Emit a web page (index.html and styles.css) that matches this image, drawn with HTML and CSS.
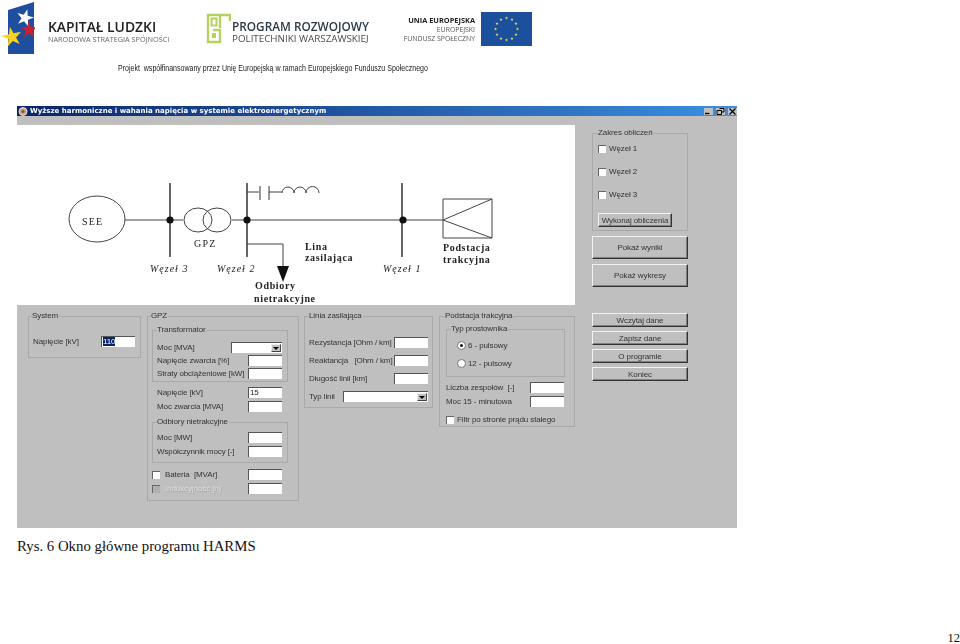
FILE: index.html
```html
<!DOCTYPE html>
<html lang="pl">
<head>
    <meta charset="UTF-8">
    <title>Rys. 6 Okno główne programu HARMS</title>
    <link rel="stylesheet" href="styles.css">
</head>
<body>
    <svg class="defs" width="0" height="0">
        <defs>
            <polygon id="star" points="0,-1 .224,-.309 .951,-.309 .363,.118 .588,.809 0,.38 -.588,.809 -.363,.118 -.951,-.309 -.224,-.309"/>
        </defs>
    </svg>

    <header class="logos">
        <div class="logo-kl">
            <svg class="kl-flag" width="34" height="56" viewBox="0 0 34 56">
                <polygon points="7,10 33,2 33,54 7,54" fill="#1d4f9e"/>
                <use href="#star" transform="translate(24 18) scale(9) rotate(15)" fill="#fff"/>
                <use href="#star" transform="translate(28 30) scale(9)" fill="#c8202c"/>
                <use href="#star" transform="translate(11 37) scale(10.5) rotate(-12)" fill="#f6d320"/>
            </svg>
            <div class="kl-text">
                <div class="kl-name">KAPITAŁ LUDZKI</div>
                <div class="kl-sub">NARODOWA STRATEGIA SPÓJNOŚCI</div>
            </div>
        </div>
        <div class="logo-pr">
            <svg width="25" height="31" viewBox="0 0 25 31">
                <path d="M14 15V2H8M8 2H2V29H14V17H7M14 2H24V8" fill="none" stroke="#b5d160" stroke-width="2.4"/>
                <rect x="5.5" y="5.5" width="5" height="7" fill="none" stroke="#b5d160" stroke-width="2"/>
                <rect x="6" y="20" width="4" height="5" fill="#b5d160"/>
            </svg>
            <div class="pr-text">
                <div class="pr-name">PROGRAM ROZWOJOWY</div>
                <div class="pr-sub">POLITECHNIKI WARSZAWSKIEJ</div>
            </div>
        </div>
        <div class="logo-eu">
            <div class="eu-text">
                <div class="eu-name">UNIA EUROPEJSKA</div>
                <div>EUROPEJSKI</div>
                <div>FUNDUSZ SPOŁECZNY</div>
            </div>
            <svg width="51" height="34" viewBox="0 0 51 34">
                <rect width="51" height="34" fill="#1c4f9c"/>
                <g fill="#e8e060">
                    <use href="#star" transform="translate(25.5 6) scale(1.7)"/>
                    <use href="#star" transform="translate(31 7.5) scale(1.7)"/>
                    <use href="#star" transform="translate(35 11.5) scale(1.7)"/>
                    <use href="#star" transform="translate(36.5 17) scale(1.7)"/>
                    <use href="#star" transform="translate(35 22.5) scale(1.7)"/>
                    <use href="#star" transform="translate(31 26.5) scale(1.7)"/>
                    <use href="#star" transform="translate(25.5 28) scale(1.7)"/>
                    <use href="#star" transform="translate(20 26.5) scale(1.7)"/>
                    <use href="#star" transform="translate(16 22.5) scale(1.7)"/>
                    <use href="#star" transform="translate(14.5 17) scale(1.7)"/>
                    <use href="#star" transform="translate(16 11.5) scale(1.7)"/>
                    <use href="#star" transform="translate(20 7.5) scale(1.7)"/>
                </g>
            </svg>
        </div>
    </header>

    <p class="project">Projekt&nbsp; współfinansowany przez Unię Europejską w ramach Europejskiego Funduszu Społecznego</p>

    <div class="window">
        <div class="titlebar">
            <svg class="app-icon" width="10" height="9" viewBox="0 0 10 9">
                <circle cx="5" cy="4.5" r="4" fill="#c9a58c" stroke="#e8e0d8"/>
                <circle cx="5" cy="4.5" r="1.6" fill="#a04a30"/>
            </svg>
            <span class="title-text">Wyższe harmoniczne i wahania napięcia w systemie elektroenergetycznym</span>
            <div class="title-buttons">
                <div class="title-btn">
                    <svg width="9" height="7" viewBox="0 0 9 7"><path d="M1 5.5H5.5" stroke="#000" stroke-width="1.4"/></svg>
                </div>
                <div class="title-btn">
                    <svg width="9" height="7" viewBox="0 0 9 7"><path d="M3.5 .5H8V4H6M1 2.5H5.5V6.5H1Z" fill="none" stroke="#000"/></svg>
                </div>
                <div class="title-btn">
                    <svg width="9" height="7" viewBox="0 0 9 7"><path d="M1.5 .5L7.5 6.5M7.5 .5L1.5 6.5" stroke="#000" stroke-width="1.2"/></svg>
                </div>
            </div>
        </div>

        <div class="client">
            <svg class="diagram" width="558" height="180" viewBox="17 125 558 180">
                <g fill="none" stroke="#444" stroke-width="1">
                    <ellipse cx="97" cy="219" rx="28" ry="23"/>
                    <ellipse cx="198" cy="220" rx="14" ry="12"/>
                    <ellipse cx="217" cy="220" rx="14" ry="12"/>
                    <path d="M125 220H183M232 220H443"/>
                    <path d="M443 199H492V238H443ZM443 220L492 199M443 220L492 238"/>
                    <path d="M247 192H259M269 192H282"/>
                    <path d="M282 193a6 6 0 0 1 12 0a6 6 0 0 1 12 0a6 6 0 0 1 13 0"/>
                    <path d="M247 244H283V266"/>
                </g>
                <g stroke="#333" stroke-width="1.5">
                    <path d="M170 183V257M247 183V257M402 183V257"/>
                    <path d="M260 186V200M269 186V200" stroke-width="1"/>
                </g>
                <circle cx="170" cy="220" r="3.6" fill="#111"/>
                <circle cx="247" cy="220" r="3.6" fill="#111"/>
                <circle cx="403" cy="220" r="3.6" fill="#111"/>
                <polygon points="277,266 289,266 283,282" fill="#111"/>
                <g class="diagram-text">
                    <text class="wide" x="82" y="225">SEE</text>
                    <text class="wide" x="194" y="247">GPZ</text>
                    <text class="node" x="150" y="272">Węzeł 3</text>
                    <text class="node" x="217" y="272">Węzeł 2</text>
                    <text class="node" x="383" y="272">Węzeł 1</text>
                    <text class="bold" x="305" y="250">Lina</text>
                    <text class="bold" x="305" y="261">zasilająca</text>
                    <text class="bold" x="443" y="251">Podstacja</text>
                    <text class="bold" x="443" y="263">trakcyjna</text>
                    <text class="bold" x="255" y="289">Odbiory</text>
                    <text class="bold" x="254" y="302">nietrakcyjne</text>
                </g>
            </svg>

            <div class="side">
                <fieldset class="box zakres">
                    <legend>Zakres obliczeń</legend>
                    <div class="checks">
                        <div class="check"><span class="checkbox"></span>Węzeł 1</div>
                        <div class="check"><span class="checkbox"></span>Węzeł 2</div>
                        <div class="check"><span class="checkbox"></span>Węzeł 3</div>
                    </div>
                    <div class="btn btn-calc">Wykonaj obliczenia</div>
                </fieldset>
                <div class="btn btn-big">Pokaż wyniki</div>
                <div class="btn btn-big">Pokaż wykresy</div>
            </div>

            <div class="panels">
                <fieldset class="box system">
                    <legend>System</legend>
                    <div class="field"><span>Napięcie [kV]</span><div class="txt"><span class="selected">110</span></div></div>
                </fieldset>

                <fieldset class="box gpz">
                    <legend>GPZ</legend>
                    <fieldset class="box transformator">
                        <legend>Transformator</legend>
                        <div class="field"><span>Moc [MVA]</span><div class="combo combo-moc"><span class="arrow"></span></div></div>
                        <div class="field"><span>Napięcie zwarcia [%]</span><div class="txt"></div></div>
                        <div class="field"><span>Straty obciążeniowe [kW]</span><div class="txt"></div></div>
                    </fieldset>
                    <div class="field loose first"><span>Napięcie [kV]</span><div class="txt">15</div></div>
                    <div class="field loose"><span>Moc zwarcia [MVA]</span><div class="txt"></div></div>
                    <fieldset class="box odbiory">
                        <legend>Odbiory nietrakcyjne</legend>
                        <div class="field"><span>Moc [MW]</span><div class="txt"></div></div>
                        <div class="field"><span>Współczynnik mocy [-]</span><div class="txt"></div></div>
                    </fieldset>
                    <div class="field bateria"><span class="check"><span class="checkbox"></span>Bateria&nbsp; [MVAr]</span><div class="txt"></div></div>
                    <div class="field bateria next"><span class="check disabled"><span class="checkbox"></span>Indukcyjność [n]</span><div class="txt"></div></div>
                </fieldset>

                <fieldset class="box linia">
                    <legend>Linia zasilająca</legend>
                    <div class="field"><span>Rezystancja [Ohm / km]</span><div class="txt"></div></div>
                    <div class="field"><span>Reaktancja&nbsp; &nbsp;[Ohm / km]</span><div class="txt"></div></div>
                    <div class="field"><span>Długość linii [km]</span><div class="txt"></div></div>
                    <div class="field"><span>Typ linii</span><div class="combo combo-linia"><span class="arrow"></span></div></div>
                </fieldset>

                <fieldset class="box podstacja">
                    <legend>Podstacja trakcyjna</legend>
                    <fieldset class="box prostownik">
                        <legend>Typ prostownika</legend>
                        <div class="radio-row"><span class="radio on"></span>6 - pulsowy</div>
                        <div class="radio-row"><span class="radio"></span>12 - pulsowy</div>
                    </fieldset>
                    <div class="field zespoly"><span>Liczba zespołów&nbsp; [-]</span><div class="txt"></div></div>
                    <div class="field minutowa"><span>Moc 15 - minutowa</span><div class="txt"></div></div>
                    <div class="check filtr"><span class="checkbox"></span>Filtr po stronie prądu stałego</div>
                </fieldset>

                <div class="actions">
                    <div class="btn">Wczytaj dane</div>
                    <div class="btn">Zapisz dane</div>
                    <div class="btn">O programie</div>
                    <div class="btn">Koniec</div>
                </div>
            </div>
        </div>
    </div>

    <p class="caption">Rys. 6 Okno główne programu HARMS</p>
    <div class="page-number">12</div>
</body>
</html>
```

FILE: styles.css
```css
html, body {
    margin: 0;
    height: 644px;
    overflow: hidden;
}
body {
    display: flex;
    flex-direction: column;
    background: #fff;
    font-family: "Liberation Serif", serif;
    color: #111;
}
.defs {
    position: absolute;
}

/* logo strip */
.logos {
    display: flex;
    height: 57px;
    filter: blur(0.5px);
    font-family: "Open Sans", sans-serif;
}
.logo-kl {
    display: flex;
    margin-left: 1px;
    width: 188px;
}
.kl-text {
    margin-left: 13px;
    padding-top: 18px;
}
.kl-name {
    font-size: 13.9px;
    line-height: 17px;
    font-weight: 600;
    color: #222;
    white-space: nowrap;
}
.kl-sub {
    font-size: 7.3px;
    line-height: 9px;
    color: #666;
    white-space: nowrap;
}
.logo-pr {
    display: flex;
    width: 197px;
    margin-left: 17px;
    padding-top: 13px;
}
.pr-text {
    margin-left: 1px;
    padding-top: 7px;
}
.pr-name {
    font-size: 11.8px;
    line-height: 13px;
    font-weight: 600;
    color: #2c3a48;
    white-space: nowrap;
}
.pr-sub {
    font-size: 9.8px;
    line-height: 12px;
    color: #4a4a4a;
    white-space: nowrap;
}
.logo-eu {
    display: flex;
    gap: 6px;
    padding-top: 12px;
}
.eu-text {
    width: 72px;
    padding-top: 4px;
    text-align: right;
    font-size: 6.9px;
    line-height: 9px;
    color: #555;
    white-space: nowrap;
}
.eu-name {
    font-size: 7.4px;
    font-weight: 700;
    color: #222;
}

.project {
    margin: 5px 0 0 118px;
    transform: scaleX(0.74);
    transform-origin: left;
    font-family: "Liberation Sans", sans-serif;
    font-size: 9.5px;
    line-height: 12px;
    color: #222;
    white-space: nowrap;
}

/* program window */
.window {
    margin: 32px 0 0 17px;
    width: 720px;
    height: 422px;
    filter: blur(0.5px);
    font-family: "Liberation Sans", sans-serif;
    font-size: 8px;
    letter-spacing: -0.1px;
    color: #333;
}
.titlebar {
    display: flex;
    align-items: center;
    height: 10px;
    padding: 0 0 0 1px;
    background: linear-gradient(to right, #0a246a, #3b8fe0);
}
.title-text {
    margin-left: 2px;
    font-family: "DejaVu Sans", sans-serif;
    font-size: 7px;
    font-weight: bold;
    letter-spacing: 0;
    color: #fff;
    white-space: nowrap;
}
.title-buttons {
    display: flex;
    gap: 3px;
    margin-left: auto;
}
.title-btn {
    display: flex;
    width: 9px;
    height: 7px;
    background: #c0c0c0;
}

.client {
    display: grid;
    grid-template-columns: 558px 1fr;
    grid-template-rows: 180px 1fr;
    height: 412px;
    box-sizing: border-box;
    padding-top: 9px;
    background: #bfbfbf;
}
.diagram {
    display: block;
    background: #fff;
}
.diagram-text {
    font-family: "Liberation Serif", serif;
    font-size: 10px;
    letter-spacing: 0.6px;
    fill: #222;
}
.diagram-text .wide {
    letter-spacing: 1.2px;
}
.diagram-text .node {
    font-style: italic;
    letter-spacing: 1px;
}
.diagram-text .bold {
    font-weight: bold;
    letter-spacing: 0.65px;
}

.box {
    box-sizing: border-box;
    margin: 0;
    padding: 0;
    min-width: 0;
    border: 1px solid #a9a9a9;
}
.box legend {
    padding: 0 1px 0 0;
    font-size: 8px;
    line-height: 8px;
}

.side {
    display: flex;
    flex-direction: column;
    gap: 5px;
    width: 96px;
    margin: 4px 0 0 17px;
}
.zakres {
    height: 102px;
    padding: 7px 0 0 5px;
}
.checks {
    display: flex;
    flex-direction: column;
    gap: 14px;
}
.check {
    display: flex;
    align-items: center;
    height: 9px;
    gap: 3px;
    white-space: nowrap;
}
.checkbox {
    flex: none;
    box-sizing: border-box;
    width: 8px;
    height: 8px;
    background: #fff;
    border-top: 1px solid #666;
    border-left: 1px solid #666;
}
.btn {
    display: flex;
    align-items: center;
    justify-content: center;
    box-sizing: border-box;
    height: 14px;
    background: #bfbfbf;
    border: 1px solid;
    border-color: #f2f2f2 #333 #333 #f2f2f2;
    box-shadow: inset -1px -1px 0 #808080;
    color: #333;
    white-space: nowrap;
}
.btn-calc {
    width: 74px;
    margin-top: 14px;
}
.btn-big {
    height: 23px;
}

.panels {
    grid-column: 1 / -1;
    display: flex;
    align-items: flex-start;
    padding: 7px 0 0 11px;
}
.field {
    display: flex;
    align-items: center;
    justify-content: space-between;
    height: 11px;
    white-space: nowrap;
}
.txt {
    flex: none;
    box-sizing: border-box;
    width: 34px;
    height: 11px;
    padding-left: 1px;
    background: #fff;
    border-top: 1px solid #555;
    border-left: 1px solid #555;
    line-height: 10px;
    color: #222;
}
.selected {
    background: #0a246a;
    color: #fff;
}
.combo {
    display: flex;
    justify-content: flex-end;
    align-items: center;
    box-sizing: border-box;
    height: 11px;
    padding-right: 1px;
    background: #fff;
    border-top: 1px solid #555;
    border-left: 1px solid #555;
}
.combo-moc {
    width: 51px;
}
.combo-linia {
    width: 85px;
}
.arrow {
    position: relative;
    width: 10px;
    height: 8px;
    background: #c0c0c0;
    border: 1px solid;
    border-color: #eee #444 #444 #eee;
    box-sizing: border-box;
}
.arrow::after {
    content: "";
    position: absolute;
    left: 1px;
    top: 2px;
    border: 3px solid transparent;
    border-top-color: #000;
    border-bottom: 0;
}

.system {
    width: 113px;
    height: 46px;
    padding: 16px 5px 0 4px;
}
.system > legend,
.gpz > legend,
.podstacja > legend {
    margin-left: -1px;
}
.gpz {
    width: 152px;
    height: 189px;
    margin-left: 6px;
    padding: 6px 0 0 4px;
}
.transformator {
    width: 136px;
    height: 56px;
    padding: 8px 5px 0 4px;
}
.transformator .field + .field {
    margin-top: 2px;
}
.loose {
    width: 125px;
    margin-left: 5px;
    margin-top: 3px;
}
.loose.first {
    margin-top: 5px;
}
.odbiory {
    width: 136px;
    height: 45px;
    margin-top: 6px;
    padding: 6px 5px 0 4px;
}
.odbiory .field + .field {
    margin-top: 3px;
}
.bateria {
    width: 130px;
    margin-top: 6px;
}
.bateria.next {
    margin-top: 3px;
}
.bateria .check {
    gap: 5px;
}
.disabled {
    color: #dcdcdc;
    text-shadow: 1px 1px 0 #a8a8a8;
}
.disabled .checkbox {
    background: #b0b0b0;
}
.linia {
    width: 129px;
    height: 96px;
    margin-left: 5px;
    padding: 17px 4px 0 4px;
}
.linia .field + .field {
    margin-top: 7px;
}
.podstacja {
    width: 136px;
    height: 115px;
    margin-left: 6px;
    padding: 5px 10px 0 6px;
}
.prostownik {
    width: 119px;
    height: 52px;
    padding: 8px 0 0 10px;
}
.prostownik > legend {
    margin-left: -6px;
}
.radio-row {
    display: flex;
    align-items: center;
    gap: 2px;
    height: 9px;
    margin-bottom: 9px;
}
.radio {
    position: relative;
    width: 9px;
    height: 9px;
    box-sizing: border-box;
    background: #fff;
    border: 1px solid #777;
    border-radius: 50%;
}
.radio.on::after {
    content: "";
    position: absolute;
    left: 2px;
    top: 2px;
    width: 3px;
    height: 3px;
    background: #111;
    border-radius: 50%;
}
.zespoly {
    margin-top: 5px;
}
.minutowa {
    margin-top: 3px;
}
.filtr {
    margin-top: 8px;
}
.actions {
    display: flex;
    flex-direction: column;
    gap: 4px;
    width: 96px;
    margin: 1px 0 0 17px;
}

.caption {
    margin: 10px 0 0 17px;
    font-size: 14.8px;
    line-height: 17px;
    color: #111;
}
.page-number {
    margin-top: auto;
    text-align: right;
    font-size: 12.5px;
    line-height: 11px;
}
```
